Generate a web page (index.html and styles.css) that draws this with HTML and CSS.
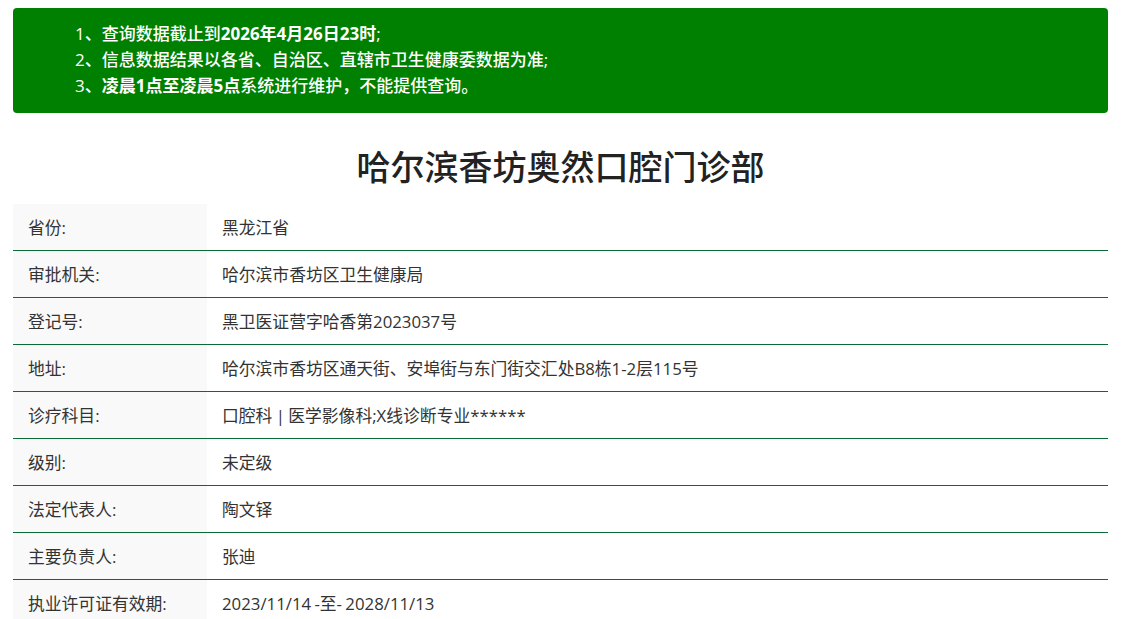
FILE: index.html
```html
<!DOCTYPE html>
<html lang="zh-CN">
<head>
<meta charset="utf-8">
<title>哈尔滨香坊奥然口腔门诊部</title>
<link rel="stylesheet" href="styles.css">
</head>
<body>
<div class="page">
  <div class="notice">
    <ol class="notice-list">
      <li>1、查询数据截止到<b>2026年4月26日23时</b>;</li>
      <li>2、信息数据结果以各省、自治区、直辖市卫生健康委数据为准;</li>
      <li>3、<b>凌晨1点至凌晨5点</b>系统进行维护，不能提供查询。</li>
    </ol>
  </div>
  <h1 class="title">哈尔滨香坊奥然口腔门诊部</h1>
  <table class="info">
    <tr><th>省份:</th><td>黑龙江省</td></tr>
    <tr><th>审批机关:</th><td>哈尔滨市香坊区卫生健康局</td></tr>
    <tr><th>登记号:</th><td>黑卫医证营字哈香第2023037号</td></tr>
    <tr><th>地址:</th><td>哈尔滨市香坊区通天街、安埠街与东门街交汇处B8栋1-2层115号</td></tr>
    <tr><th>诊疗科目:</th><td>口腔科 | 医学影像科;X线诊断专业******</td></tr>
    <tr><th>级别:</th><td>未定级</td></tr>
    <tr><th>法定代表人:</th><td>陶文铎</td></tr>
    <tr><th>主要负责人:</th><td>张迪</td></tr>
    <tr><th>执业许可证有效期:</th><td>2023/11/14 -至- 2028/11/13</td></tr>
  </table>
</div>
</body>
</html>
```
FILE: styles.css
```css
html, body {
  margin: 0;
  padding: 0;
  background: #fff;
}
body {
  font-family: "Open Sans", "Noto Sans CJK SC", sans-serif;
  color: #333;
  font-size: 16.8px;
}
.page {
  width: 1095px;
  margin: 0 0 0 13px;
  padding-top: 8px;
}
.notice {
  background: #008000;
  border-radius: 4px;
  height: 105px;
  box-sizing: border-box;
  padding: 13px 0 0 62px;
  color: #fff;
}
.notice-list {
  list-style: none;
  margin: 0;
  padding: 0;
  font-size: 17px;
  line-height: 26px;
  font-weight: 500;
}
.notice-list b {
  font-weight: 700;
}
.title {
  margin: 0;
  height: 91px;
  box-sizing: border-box;
  padding-top: 29px;
  line-height: 50px;
  text-align: center;
  font-size: 34px;
  font-weight: 500;
  color: #222;
}
.info {
  width: 100%;
  border-collapse: collapse;
}
.info th, .info td {
  height: 46px;
  padding: 0 15px;
  text-align: left;
  font-weight: 400;
  vertical-align: middle;
  color: #333;
  border-bottom: 1px solid #0b6a36;
}
.info th {
  width: 164px;
  background: #f9f9f9;
}
.info tr:last-child th, .info tr:last-child td {
  border-bottom: none;
}
.info td {
  word-spacing: -1px;
}
```
